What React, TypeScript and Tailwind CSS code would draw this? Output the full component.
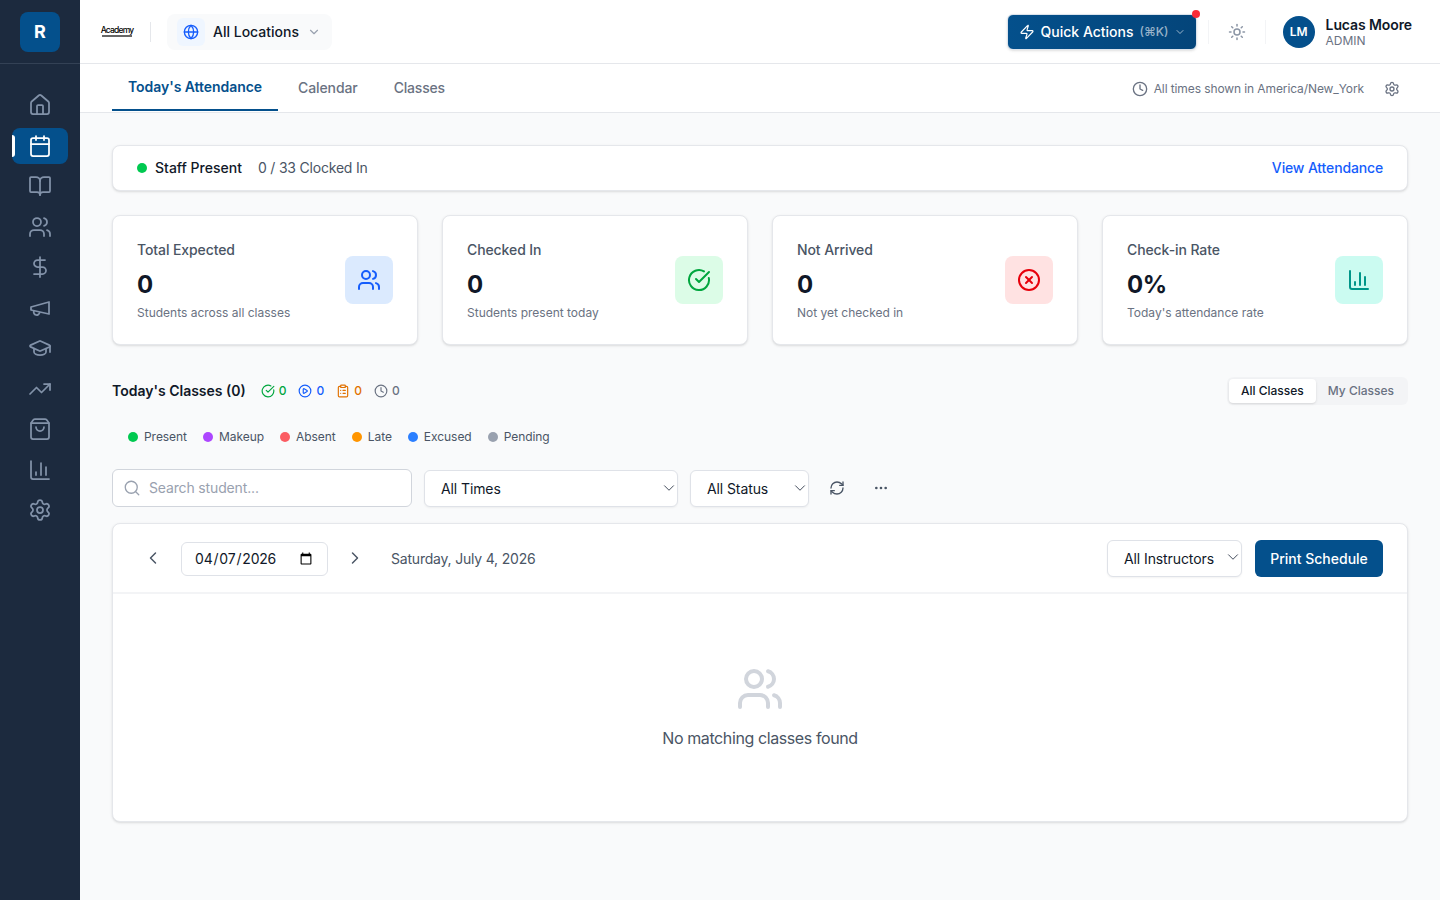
import {
  BarChart3,
  BookOpen,
  Calendar,
  CheckCircle,
  ChevronDown,
  ChevronLeft,
  ChevronRight,
  CirclePlay,
  CircleX,
  ClipboardList,
  Clock,
  DollarSign,
  Ellipsis,
  Globe,
  GraduationCap,
  Home,
  RefreshCw,
  Search,
  Settings,
  ShoppingBag,
  Sun,
  TrendingUp,
  Users,
  Zap,
} from 'lucide-react';

// older lucide megaphone, the current one has extra strokes
function MegaphoneIcon({ className, strokeWidth }: { className?: string; strokeWidth?: number }) {
  return (
    <svg viewBox="0 0 24 24" fill="none" stroke="currentColor" strokeWidth={strokeWidth} strokeLinecap="round" strokeLinejoin="round" className={className}>
      <path d="m3 11 18-5v12L3 14v-3z" />
      <path d="M11.6 16.8a3 3 0 1 1-5.8-1.6" />
    </svg>
  );
}

const navItems = [Home, Calendar, BookOpen, Users, DollarSign, MegaphoneIcon, GraduationCap, TrendingUp, ShoppingBag, BarChart3, Settings];

const stats = [
  { title: 'Total Expected', value: '0', note: 'Students across all classes', Icon: Users, box: 'bg-[#dbeafe]', icon: 'text-[#155dfc]' },
  { title: 'Checked In', value: '0', note: 'Students present today', Icon: CheckCircle, box: 'bg-[#dcfce7]', icon: 'text-[#00a63e]' },
  { title: 'Not Arrived', value: '0', note: 'Not yet checked in', Icon: CircleX, box: 'bg-[#ffe2e2]', icon: 'text-[#e7000b]' },
  { title: 'Check-in Rate', value: '0%', note: "Today's attendance rate", Icon: BarChart3, box: 'bg-[#cbfbf1]', icon: 'text-[#009689]' },
];

const legend = [
  { label: 'Present', dot: 'bg-[#00c950]' },
  { label: 'Makeup', dot: 'bg-[#ad46ff]' },
  { label: 'Absent', dot: 'bg-[#fb5c62]' },
  { label: 'Late', dot: 'bg-[#ff9500]' },
  { label: 'Excused', dot: 'bg-[#2b7fff]' },
  { label: 'Pending', dot: 'bg-[#99a1af]' },
];

function Sidebar() {
  return (
    <aside className="w-20 shrink-0 bg-[#1c2a3e] flex flex-col">
      <div className="h-16 border-b border-[#334155] flex items-center justify-center">
        <div className="w-10 h-10 rounded-lg bg-[#04508c] flex items-center justify-center text-white font-bold text-lg">R</div>
      </div>
      <nav className="pt-[23px] pl-3 flex flex-col gap-[4.5px]">
        {navItems.map((Icon, i) => (
          <div key={i} className={`relative w-14 h-9 rounded-lg flex items-center justify-center ${i === 1 ? 'bg-[#04508c] text-white' : 'text-[#8292a9]'}`}>
            {i === 1 && <span className="absolute left-0 top-[7px] w-[3px] h-[22px] bg-white rounded-r" />}
            <Icon className="w-6 h-6" strokeWidth={1.75} />
          </div>
        ))}
      </nav>
    </aside>
  );
}

function Header() {
  return (
    <header className="h-16 shrink-0 bg-white border-b border-[#e5e7eb] flex items-center pl-[22px] pr-7">
      <div className="w-[30px] flex flex-col items-center leading-none text-black">
        <span className="text-[8.5px] font-medium tracking-[-0.8px] h-[7px] leading-[7px]">Academy</span>
        <span className="mt-px w-full h-[2px] bg-[#666]" />
      </div>
      <div className="w-px h-5 bg-[#e5e7eb] ml-[18px]" />
      <div className="ml-4 h-9 w-[165px] rounded-lg bg-[#f9fafb] flex items-center pl-2.5">
        <div className="w-7 h-7 rounded-md bg-[#eff6ff] flex items-center justify-center">
          <Globe className="w-4 h-4 text-[#155dfc]" />
        </div>
        <span className="ml-2 text-sm font-medium text-[#101828]">All Locations</span>
        <ChevronDown className="ml-2 w-3.5 h-3.5 text-[#99a1af]" />
      </div>
      <div className="ml-auto relative h-9 w-[190px] rounded-md bg-gradient-to-r from-[#04508c] to-[#04457a] border border-[#dbe3ec] flex items-center pl-[11px] text-white shadow-sm">
        <Zap className="w-4 h-4" strokeWidth={1.75} />
        <span className="ml-1.5 text-sm font-medium">Quick Actions</span>
        <span className="ml-1.5 text-xs font-medium text-white/60">(⌘K)</span>
        <ChevronDown className="ml-[5px] w-3 h-3 text-white/60" />
        <span className="absolute -top-[5px] -right-1 w-2 h-2 rounded-full bg-[#fb2c36]" />
      </div>
      <div className="w-px h-6 bg-[#f3f4f6] ml-[11px]" />
      <Sun className="ml-[19px] w-[18px] h-[18px] text-[#8b95a5]" />
      <div className="w-px h-6 bg-[#f3f4f6] ml-[19px]" />
      <div className="ml-[17px] w-8 h-8 rounded-full bg-[#04508c] text-white text-xs font-semibold flex items-center justify-center">LM</div>
      <div className="ml-[11px] pt-0.5 flex flex-col">
        <span className="text-sm leading-4 font-semibold tracking-[-0.1px] text-[#101828]">Lucas Moore</span>
        <span className="text-xs leading-4 text-[#6a7282]">ADMIN</span>
      </div>
    </header>
  );
}

function Tabs() {
  return (
    <div className="h-[49px] shrink-0 bg-white border-b border-[#e5e7eb] flex items-center pl-8 pr-10">
      <div className="h-full flex items-start">
        <div className="h-[47px] px-4 flex items-center border-b-2 border-[#04508c] text-sm font-semibold tracking-[-0.05px] text-[#04508c]">Today's Attendance</div>
        <div className="h-[47px] ml-1 px-4 flex items-center text-sm font-medium tracking-[-0.1px] text-[#6a7282]">Calendar</div>
        <div className="h-[47px] ml-1 px-4 flex items-center text-sm font-medium tracking-[-0.2px] text-[#6a7282]">Classes</div>
      </div>
      <div className="ml-auto flex items-center text-[#6a7282] pt-0.5">
        <Clock className="w-4 h-4" />
        <span className="ml-1.5 text-xs tracking-[-0.1px]">All times shown in America/New_York</span>
        <Settings className="ml-5 w-4 h-4" />
      </div>
    </div>
  );
}

function StatCard({ title, value, note, Icon, box, icon }: (typeof stats)[number]) {
  return (
    <div className="h-[130px] bg-white rounded-lg border border-[#e5e7eb] shadow-sm px-6 flex items-center justify-between">
      <div>
        <div className="text-sm font-medium tracking-[-0.1px] text-[#4a5565] leading-5">{title}</div>
        <div className="mt-[9px] text-2xl font-bold tracking-[-0.5px] text-[#101828] leading-8">{value}</div>
        <div className="mt-1 text-xs text-[#6a7282] leading-4">{note}</div>
      </div>
      <div className={`w-12 h-12 rounded-lg flex items-center justify-center ${box}`}>
        <Icon className={`w-6 h-6 ${icon}`} />
      </div>
    </div>
  );
}

function SelectBox({ label, className }: { label: string; className: string }) {
  return (
    <div className={`relative ${className}`}>
      <select className="w-full h-[37px] appearance-none rounded-md border border-[#dfe2e8] bg-white pl-4 text-sm tracking-[-0.1px] text-[#101828] shadow-xs">
        <option>{label}</option>
      </select>
      <ChevronDown className="absolute top-[9px] right-0 w-[18px] h-[18px] text-[#374151] pointer-events-none" strokeWidth={1.25} />
    </div>
  );
}

export default function App() {
  return (
    <div className="w-full h-screen flex bg-[#f9fafb] overflow-hidden font-['Inter',sans-serif]">
      <Sidebar />
      <div className="flex-1 min-w-0 flex flex-col">
        <Header />
        <Tabs />
        <main className="flex-1 px-8 pt-8">
          <div className="h-[46px] bg-white rounded-lg border border-[#e5e7eb] shadow-sm pl-6 pr-6 flex items-center text-sm">
            <span className="w-2.5 h-2.5 rounded-full bg-[#00c950]" />
            <span className="ml-2 font-medium text-[#101828]">Staff Present</span>
            <span className="ml-4 tracking-[-0.2px] text-[#4a5565]">0 / 33 Clocked In</span>
            <span className="ml-auto font-medium tracking-[-0.15px] text-[#155dfc]">View Attendance</span>
          </div>

          <div className="mt-6 grid grid-cols-4 gap-6">
            {stats.map((s) => (
              <StatCard key={s.title} {...s} />
            ))}
          </div>

          <div className="mt-8 h-7 flex items-center">
            <h2 className="text-sm font-semibold text-[#101828]">Today's Classes (0)</h2>
            <div className="ml-[15px] flex items-center gap-1 text-xs font-medium text-[#00a63e]">
              <CheckCircle className="w-3.5 h-3.5" />0
            </div>
            <div className="ml-3 flex items-center gap-1 text-xs font-medium text-[#155dfc]">
              <CirclePlay className="w-3.5 h-3.5" />0
            </div>
            <div className="ml-3 flex items-center gap-1 text-xs font-medium text-[#e17100]">
              <ClipboardList className="w-3.5 h-3.5" />0
            </div>
            <div className="ml-3 flex items-center gap-1 text-xs font-medium text-[#6a7282]">
              <Clock className="w-3.5 h-3.5" />0
            </div>
            <div className="ml-auto h-7 rounded-md bg-[#f3f4f6] p-0.5 flex items-center text-xs font-medium">
              <span className="h-6 px-3 rounded bg-white shadow-sm text-[#101828] flex items-center">All Classes</span>
              <span className="h-6 px-3 text-[#6a7282] flex items-center">My Classes</span>
            </div>
          </div>

          <div className="mt-5 h-6 pl-4 flex items-center gap-4">
            {legend.map((l) => (
              <div key={l.label} className="flex items-center gap-1.5 text-xs tracking-[-0.05px] text-[#4a5565]">
                <span className={`w-2.5 h-2.5 rounded-full ${l.dot}`} />
                {l.label}
              </div>
            ))}
          </div>

          <div className="mt-5 flex items-center">
            <div className="w-[300px] h-[38px] rounded-md border border-[#d1d5dc] bg-white flex items-center pl-[10px]">
              <Search className="w-[18px] h-[18px] text-[#99a1af]" strokeWidth={1.75} />
              <input placeholder="Search student..." className="ml-2 flex-1 min-w-0 text-sm tracking-[-0.15px] text-[#101828] placeholder:text-[#99a1af] outline-none bg-transparent" />
            </div>
            <SelectBox label="All Times" className="ml-3 w-[254px] mt-px" />
            <SelectBox label="All Status" className="ml-3 w-[119px] mt-px" />
            <RefreshCw className="ml-[20px] w-4 h-4 text-[#4a5565]" />
            <Ellipsis className="ml-[28px] w-4 h-4 text-[#4a5565]" />
          </div>

          <div className="mt-4 h-[299px] bg-white rounded-lg border border-[#e5e7eb] shadow-sm flex flex-col">
            <div className="h-[70px] shrink-0 border-b-2 border-[#f3f4f6] pl-[30px] pr-6 flex items-center">
              <ChevronLeft className="w-5 h-5 text-[#4a5565]" strokeWidth={1.75} />
              <input type="date" defaultValue="2026-04-07" className="ml-[18px] w-[147px] h-[34px] mt-px rounded-md border border-[#dfe2e8] px-3 text-sm tracking-[-0.2px] text-[#101828] bg-white" />
              <ChevronRight className="ml-[17px] w-5 h-5 text-[#4a5565]" strokeWidth={1.75} />
              <span className="ml-[26px] mt-px text-sm tracking-[-0.2px] text-[#4a5565]">Saturday, July 4, 2026</span>
              <SelectBox label="All Instructors" className="ml-auto w-[135px] pt-px" />
              <button className="ml-[13px] w-[128px] h-[37px] pt-px rounded-md bg-[#04508c] text-white text-sm font-medium">Print Schedule</button>
            </div>
            <div className="flex-1 flex flex-col items-center pt-[71px]">
              <Users className="w-12 h-12 text-[#d1d5dc]" />
              <p className="mt-[13px] text-base tracking-[-0.4px] text-[#4a5565]">No matching classes found</p>
            </div>
          </div>
        </main>
      </div>
    </div>
  );
}
